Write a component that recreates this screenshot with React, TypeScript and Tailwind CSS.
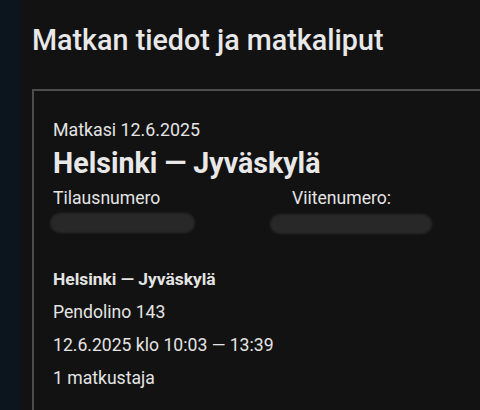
import React from 'react';

const font = { fontFamily: 'Roboto, "Noto Sans", sans-serif' };

const details: string[] = ['Pendolino 143', '12.6.2025 klo 10:03 — 13:39', '1 matkustaja'];

const Redacted: React.FC<{ width: string }> = ({ width }) => (
    <div className={`h-[20px] ${width} rounded-[10px] bg-[#282828] blur-[1px]`}></div>
);

export default function App() {
    return (
        <div className="flex w-[480px] h-[410px] overflow-hidden bg-[#121212] text-[#e4e4e4]" style={font}>
            {/* Side strip */}
            <div className="w-[20px] shrink-0 bg-[#0c141d]"></div>

            <div className="flex-1 pl-[12px] overflow-hidden">
                <h1 className="mt-[22px] text-[28.7px] leading-[36px] font-medium text-[#e8e8e8] whitespace-nowrap">
                    Matkan tiedot ja matkaliput
                </h1>

                {/* Ticket card */}
                <div className="mt-[31px] w-[470px] h-[400px] border-2 border-[#4d4d4d] pl-[19px] pt-[27px]">
                    <p className="text-[17.8px] leading-[24px]">Matkasi 12.6.2025</p>
                    <h2 className="mt-[3px] text-[28.6px] leading-[36px] font-bold text-[#e8e8e8] whitespace-nowrap">
                        Helsinki — Jyväskylä
                    </h2>

                    <div className="mt-[5px] grid grid-cols-[239px_1fr]">
                        <p className="text-[17.6px] leading-[24px]">Tilausnumero</p>
                        <p className="text-[17.6px] leading-[24px]">Viitenumero:</p>
                        <div className="mt-[3px] -ml-[3px]">
                            <Redacted width="w-[145px]" />
                        </div>
                        <div className="mt-[4px] -ml-[22px]">
                            <Redacted width="w-[162px]" />
                        </div>
                    </div>

                    <div className="mt-[29px]">
                        <p className="text-[17.4px] leading-[33px] font-bold">Helsinki — Jyväskylä</p>
                        {details.map((line) => (
                            <p key={line} className="text-[17.6px] leading-[33px]">{line}</p>
                        ))}
                    </div>
                </div>
            </div>
        </div>
    );
}
